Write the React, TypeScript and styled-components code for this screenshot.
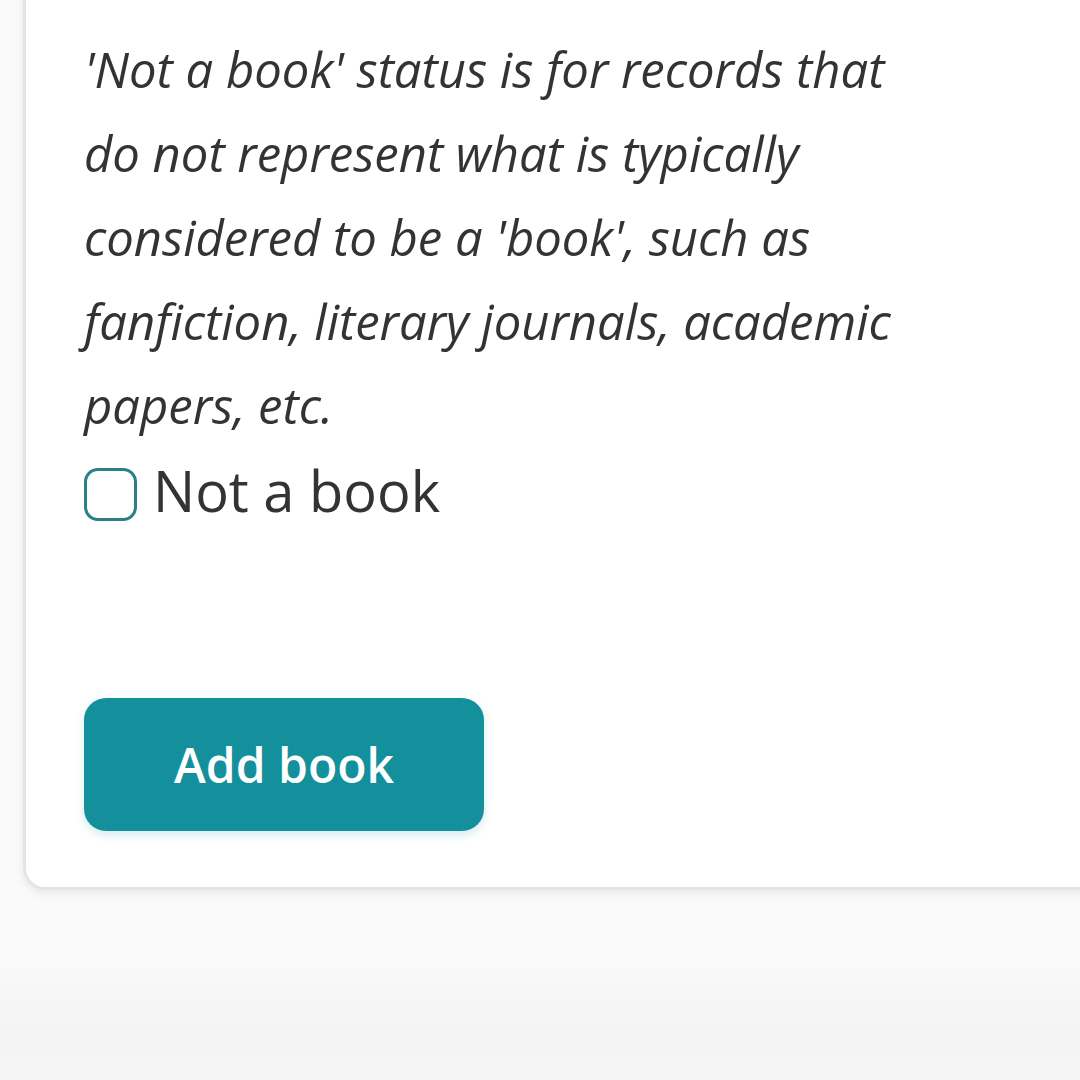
import React from 'react';
import styled, { createGlobalStyle } from 'styled-components';

const GlobalStyle = createGlobalStyle`
  html, body {
    margin: 0;
    padding: 0;
    background: #f9f9f9;
    font-family: 'Open Sans', 'Noto Sans', sans-serif;
    overflow: hidden;
  }
`;

const Page = styled.div`
  width: 1080px;
  height: 1080px;
  overflow: hidden;
  background: linear-gradient(to bottom, #fafafa 0%, #fafafa 88%, #f3f3f3 96%, #f6f6f6 100%);
`;

const Card = styled.div`
  margin-left: 23px;
  margin-top: -40px;
  width: 1100px;
  box-sizing: border-box;
  padding: 64px 0 56px 58px;
  background: #fff;
  border-radius: 22px;
  border: 3px solid #e4e4e4;
  box-shadow: 0 4px 8px rgba(0, 0, 0, 0.07);
`;

const Hint = styled.p`
  margin: 0;
  width: 830px;
  font-style: italic;
  font-size: 49px;
  line-height: 84px;
  color: #333;
`;

const CheckRow = styled.label`
  display: flex;
  align-items: center;
  gap: 16px;
  margin-top: 5px;
`;

const Box = styled.span`
  width: 47px;
  height: 47px;
  border: 3px solid #2c7f87;
  border-radius: 14px;
  box-sizing: content-box;
  flex: none;
  margin-top: 8px;
`;

const Label = styled.span`
  font-size: 56px;
  color: #333;
`;

const ButtonRow = styled.div`
  margin-top: 170px;
`;

const AddButton = styled.button`
  width: 400px;
  height: 133px;
  border: none;
  border-radius: 22px;
  background: #13909b;
  color: #fff;
  font-family: 'Open Sans', 'Noto Sans', sans-serif;
  font-weight: 600;
  font-size: 48px;
  box-shadow: 0 4px 10px rgba(19, 144, 155, 0.18);
`;

export default function App() {
  return (
    <Page>
      <GlobalStyle />
      <Card>
        <Hint>
          'Not a book' status is for records that do not represent what is typically
          considered to be a 'book', such as fanfiction, literary journals, academic
          papers, etc.
        </Hint>
        <CheckRow>
          <Box />
          <Label>Not a book</Label>
        </CheckRow>
        <ButtonRow>
          <AddButton>Add book</AddButton>
        </ButtonRow>
      </Card>
    </Page>
  );
}
